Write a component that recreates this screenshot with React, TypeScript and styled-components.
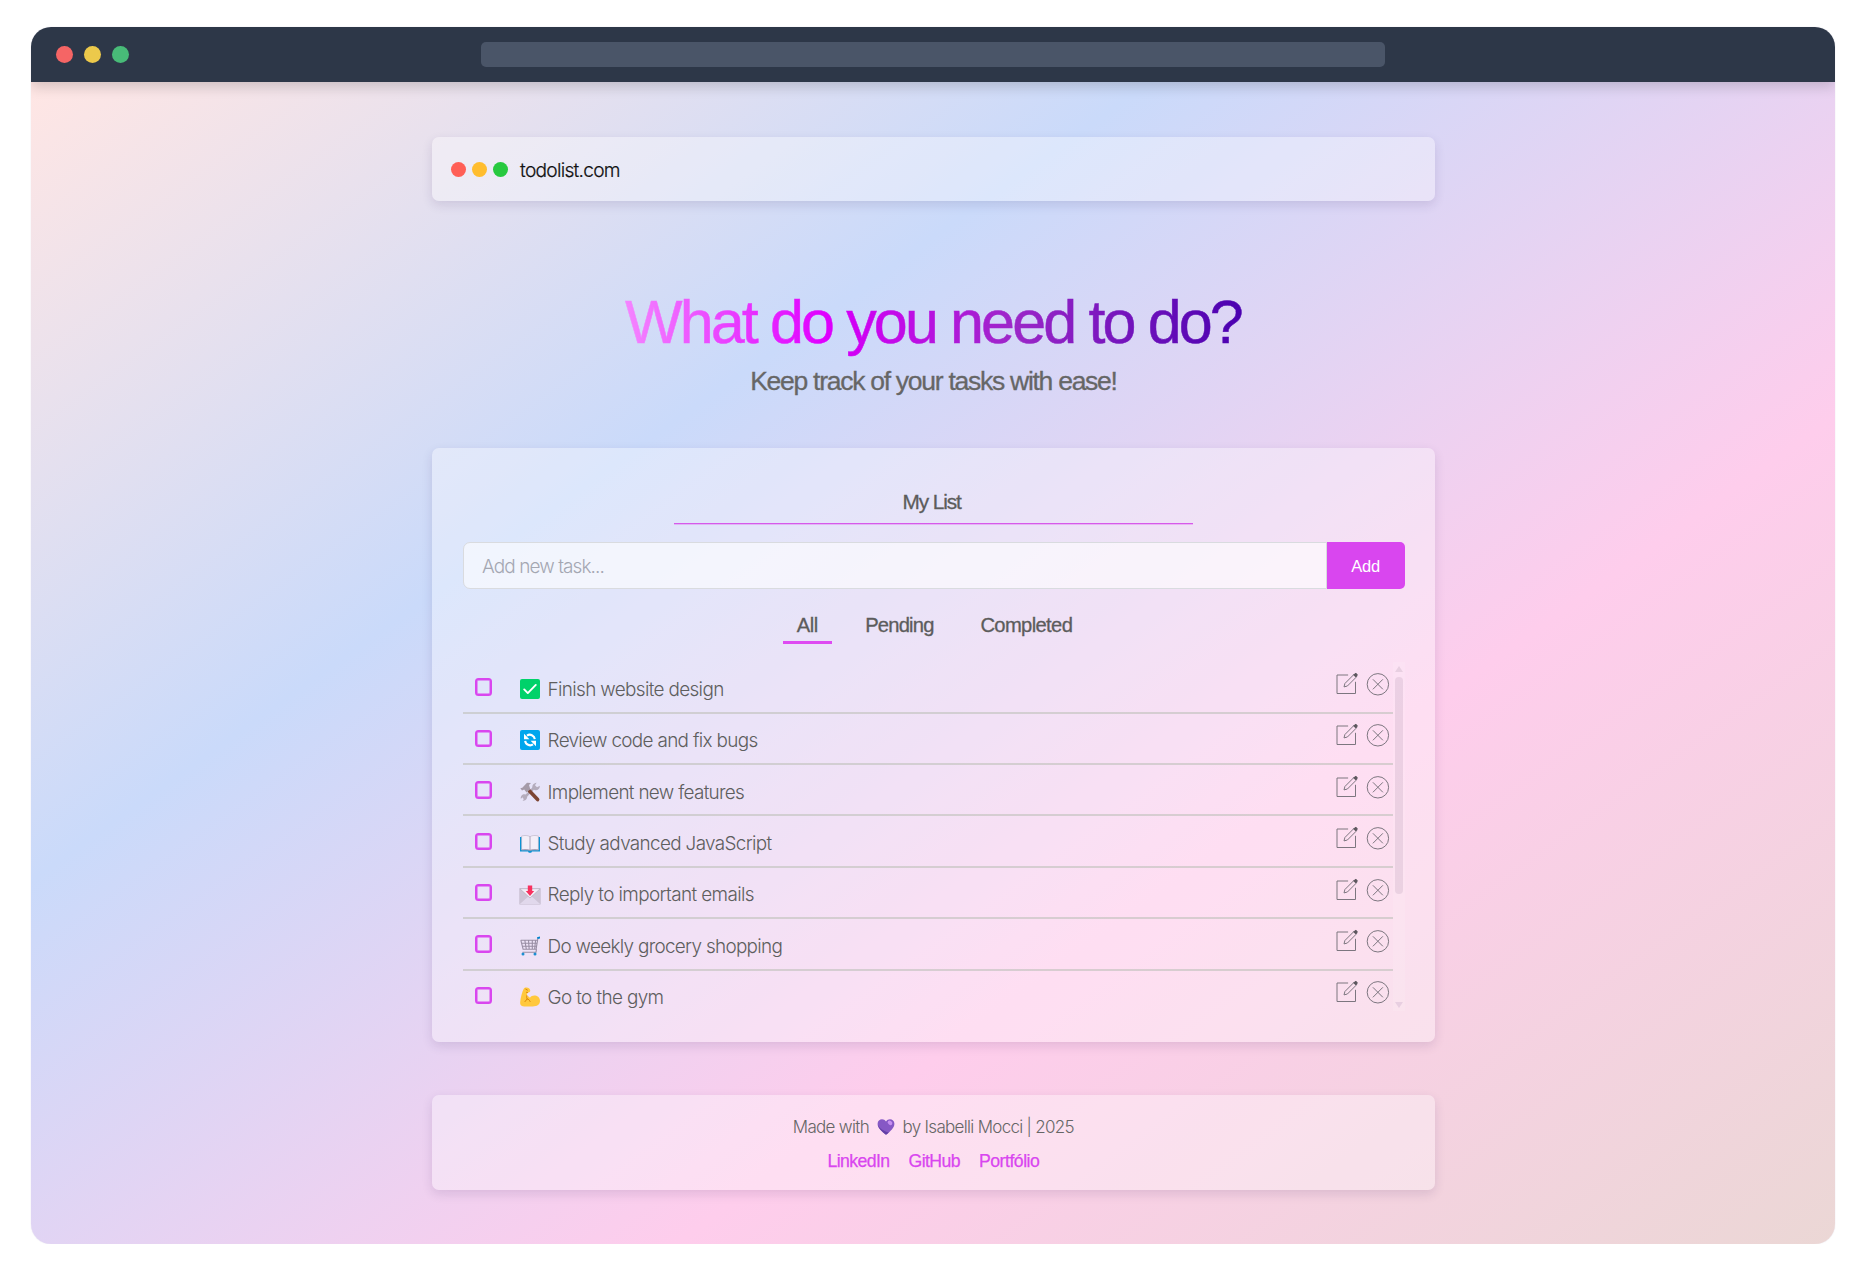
import React from "react";
import styled, { createGlobalStyle } from "styled-components";

const GlobalStyle = createGlobalStyle`
  * { box-sizing: border-box; }
  body { margin: 0; background: #fff; overflow: hidden; }
`;

const grotesk = `"Liberation Sans", Arial, sans-serif`;
const light = `Inter, "Liberation Sans", sans-serif`;
const accent = "#d946ef";

const Browser = styled.div`
  width: 1804.2px;
  height: 1217.3px;
  margin: 27px 0 0 31.3px;
  border-radius: 20px;
  overflow: hidden;
  display: flex;
  flex-direction: column;
  box-shadow: 0 0 1px rgba(120, 110, 160, 0.35);
`;

const TopBar = styled.header`
  flex: none;
  height: 55.4px;
  display: grid;
  grid-template-columns: 1fr 904px 1fr;
  align-items: center;
  background: #2d3748;
  box-shadow: 0 5px 12px rgba(0, 0, 0, 0.16);
  z-index: 1;
`;

const Lights = styled.div<{ $gap: number }>`
  display: flex;
  gap: ${(p) => p.$gap}px;
`;

const WindowLights = styled(Lights)`
  padding-left: 24.7px;
`;

const Light = styled.span<{ $color: string; $size: number }>`
  width: ${(p) => p.$size}px;
  height: ${(p) => p.$size}px;
  border-radius: 50%;
  background: ${(p) => p.$color};
`;

const AddressBar = styled.div`
  height: 25px;
  border-radius: 5px;
  background: #4a5568;
`;

const Page = styled.main`
  flex: 1;
  padding-top: 54.9px;
  display: flex;
  flex-direction: column;
  align-items: center;
  background: linear-gradient(144.5deg, #ffe6e4 0%, #cadafa 32.6%, #fecdec 66.2%, #ebd7d5 100%);
`;

const Card = styled.section`
  width: 1003.6px;
  border-radius: 7px;
  background: rgba(255, 255, 255, 0.35);
  box-shadow: 0 4px 11px rgba(40, 20, 80, 0.12);
`;

const SiteCard = styled(Card)`
  height: 64px;
  padding: 0 19.9px;
  display: flex;
  align-items: center;
  gap: 12px;
`;

const SiteName = styled.span`
  padding-top: 1px;
  font: 300 19.2px/24px ${light};
  letter-spacing: -0.75px;
  color: #111;
  -webkit-text-stroke: 0.2px #111;
`;

const Title = styled.h1`
  margin: 85.6px 0 0;
  padding: 0 1px 0 0;
  font: 400 61px/70px ${grotesk};
  letter-spacing: -2.86px;
  color: transparent;
  -webkit-text-stroke: 0.5px transparent;
  background: linear-gradient(90deg, #f485ff 0%, #e000ff 32%, #d000f4 37%, #9c27c8 63%, #4a00b0 100%);
  background-clip: text;
  -webkit-background-clip: text;
`;

const Subtitle = styled.p`
  margin: 8.2px 0 51.2px;
  font: 400 26.5px/32px ${grotesk};
  letter-spacing: -1.27px;
  color: #666;
  -webkit-text-stroke: 0.3px #666;
`;

const ListCard = styled(Card)`
  padding: 41.5px 30.5px 31px 31px;
  display: flex;
  flex-direction: column;
  align-items: center;
`;

const ListTitle = styled.h2`
  width: 519px;
  margin: 0;
  padding: 0 4px 9.5px 0;
  text-align: center;
  font: 400 20.8px/24px ${grotesk};
  letter-spacing: -1.1px;
  color: #5c5c5c;
  -webkit-text-stroke: 0.3px #5c5c5c;
  border-bottom: 1px solid #d65aea;
  box-shadow: 0 1px 0 rgba(217, 70, 239, 0.3);
`;

const AddForm = styled.form`
  width: 100%;
  height: 47px;
  margin: 18px 0 24px;
  display: flex;
`;

const TaskInput = styled.input`
  flex: 1;
  min-width: 0;
  padding: 3px 18.5px 0;
  border: 1px solid #d9dbdf;
  border-radius: 7px 0 0 7px;
  background: rgba(255, 255, 255, 0.6);
  outline: none;
  font: 300 19px/24px ${light};
  letter-spacing: -0.93px;
  &::placeholder {
    color: #a4a7b2;
    opacity: 1;
  }
`;

const AddButton = styled.button`
  width: 78px;
  padding: 0;
  border: 0;
  border-radius: 0 5px 5px 0;
  background: ${accent};
  color: #fff;
  font: 400 16.5px/20px ${grotesk};
  letter-spacing: -0.2px;
`;

const Tabs = styled.nav`
  display: flex;
  gap: 19.6px;
  margin: 0 0 18px 1px;
`;

const Tab = styled.button<{ $active?: boolean; $track: number }>`
  padding: 0 ${(p) => 14 + p.$track}px 4px 14px;
  border: 0;
  border-bottom: 3px solid ${(p) => (p.$active ? "#de4bf2" : "transparent")};
  background: none;
  font: 400 20.2px/24px ${grotesk};
  letter-spacing: ${(p) => p.$track}px;
  color: #5c5c5c;
  -webkit-text-stroke: 0.3px #5c5c5c;
`;

const ListViewport = styled.div`
  width: 100%;
  height: 349px;
  display: flex;
  overflow: hidden;
`;

const TaskList = styled.ul`
  flex: 1;
  margin: 0;
  padding: 0;
  list-style: none;
`;

const TaskRow = styled.li`
  height: 51.4px;
  padding: 0 2.3px 0 12px;
  display: flex;
  align-items: flex-start;
  border-bottom: 2px solid rgba(192, 194, 188, 0.62);
`;

const Check = styled.span`
  width: 17.4px;
  height: 17.4px;
  margin-top: 16.2px;
  border: 2px solid ${accent};
  border-radius: 3.5px;
  box-shadow: inset 0 0 0 0.5px ${accent};
`;

const Emoji = styled.svg`
  width: 22px;
  height: 22px;
  margin: 15.7px 0 0 27.2px;
  flex: none;
`;

const TaskText = styled.span<{ $track: number }>`
  flex: 1;
  margin: 15.5px 0 0 6.4px;
  font: 300 18.9px/24px ${light};
  letter-spacing: ${(p) => p.$track}px;
  color: #5e5e5e;
`;

const RowIcon = styled.svg`
  width: 24px;
  height: 24px;
  margin: 9.8px 0 0 8.8px;
  fill: none;
  stroke: #7c767f;
  stroke-width: 1;
`;

const Scroll = styled.div`
  width: 12px;
  padding: 3.5px 0;
  display: flex;
  flex-direction: column;
  align-items: center;
  background: rgba(255, 255, 255, 0.1);
`;

const Arrow = styled.span<{ $down?: boolean }>`
  border: 4px solid transparent;
  border-top-width: ${(p) => (p.$down ? 6 : 0)}px;
  border-bottom-width: ${(p) => (p.$down ? 0 : 6)}px;
  border-${(p) => (p.$down ? "top" : "bottom")}-color: #e8cfe1;
`;

const Thumb = styled.span`
  width: 8px;
  height: 217px;
  margin: 5.5px 0 auto;
  border-radius: 4px;
  background: rgba(190, 160, 185, 0.28);
`;

const Footer = styled(Card)`
  margin-top: 52.5px;
  height: 95.4px;
  padding-top: 21px;
  display: flex;
  flex-direction: column;
  align-items: center;
`;

const Credit = styled.p`
  margin: 0 0 12.3px;
  display: flex;
  align-items: center;
  font: 300 17px/22px ${light};
  letter-spacing: -0.7px;
  color: #666;
`;

const Heart = styled.svg`
  width: 18px;
  height: 18px;
  margin: 1px 7.8px 0;
`;

const Links = styled.div`
  display: flex;
  gap: 19px;
`;

const Link = styled.a<{ $track: number }>`
  font: 400 17.7px/22px ${grotesk};
  letter-spacing: ${(p) => p.$track}px;
  color: ${accent};
  -webkit-text-stroke: 0.25px ${accent};
`;

const emojis: Record<string, React.ReactNode> = {
  check: (
    <>
      <rect x="1" y="1" width="20" height="20" rx="2" fill="#00d26a" />
      <path d="M5.2 11.4l3.6 3.7 8-8.2" fill="none" stroke="#fff" strokeWidth="1.9" strokeLinecap="round" strokeLinejoin="round" />
    </>
  ),
  cycle: (
    <>
      <rect x="1" y="1" width="20" height="20" rx="2" fill="#00a6ed" />
      <path d="M15.8 10.2A5 5 0 0 0 8 6.6M6.2 11.8a5 5 0 0 0 7.8 3.6" fill="none" stroke="#fff" strokeWidth="2.1" />
      <path d="M5 4.8v5.4h5.4zM17 17.2v-5.4h-5.4z" fill="#fff" />
    </>
  ),
  tools: (
    <>
      <path d="M4.5 17.6L15.5 6.2" stroke="#b4acbc" strokeWidth="2.6" />
      <path d="M13.6 7.6c-.9-2.9.6-5.6 4-5.9L16 4.2l2 2 2.9-1.5c.1 3.4-2.7 5.1-5.4 4.3zM7.6 14.2c1.6 2-.2 5.9-4 5.5l1.5-2-1.3-1.4-2 1.4c-.5-3.3 3-5.7 5.8-3.5z" fill="#b4acbc" />
      <path d="M10.3 9.8l8.3 8.8" stroke="#7d4533" strokeWidth="3.6" strokeLinecap="round" />
      <path d="M1.3 7.3l2-.6L8 1.7l4 .3-2 2 1.3 4.2-3.8 3.2-2.3-2.8-2.2.9z" fill="#a59ba8" />
    </>
  ),
  book: (
    <>
      <path d="M1 5h20v14.5h-8l-.8 1.300H9.8L9 19.500H1z" fill="#0b93d3" />
      <path d="M2.600 4c3-.8 6.200-.8 8.400.7 2.200-1.500 5.400-1.500 8.400-.7V18H2.600z" fill="#f3eef8" stroke="#b9b0c2" strokeWidth=".6" />
      <path d="M11 4.600V18.200M2.600 17.900c3-.6 6.200-.6 8.400.6 2.200-1.200 5.400-1.200 8.400-.6" fill="none" stroke="#9b93ab" strokeWidth=".8" />
    </>
  ),
  mail: (
    <>
      <rect x=".2" y="4.300" width="21.600" height="16.500" rx="1" fill="#cdc4d6" />
      <path d="M.6 20.300L9 12.800h4l8.400 7.500z" fill="#e1d8ec" />
      <path d="M.8 4.700h20.400L11 14z" fill="#f3eef8" stroke="#b4acbc" strokeWidth=".7" />
      <path d="M8.800 1.500h4.400V7h2L11 12 6.800 7h2z" fill="#f8315f" />
    </>
  ),
  cart: (
    <>
      <path d="M1.800 5.200l2.300 9h13L19 2.600M5.800 5.200l1.500 9M9.500 5.200l.7 9M13.300 5.200v9M16.600 5.200l-1 9M1.800 5.200h16.600M2.600 8.200h15.200M3.400 11.200h14M17.500 14.200l-.5 3H3.500" fill="none" stroke="#998ea4" strokeWidth="1.100" />
      <path d="M18 2.200l3-.6v2l-2.400.3z" fill="#0084ce" />
      <circle cx="4" cy="19" r="1.500" fill="#1c8fd2" />
      <circle cx="16" cy="19" r="1.500" fill="#1c8fd2" />
    </>
  ),
  muscle: (
    <>
      <path d="M6.500 1.600c2.300-.6 4.500.8 4.700 2.600.2 1.700-1.200 2.600-2.700 2.300L7.800 9.600c1.300.4 2.300 1.200 3.100 2.200 2.600-4 9.900-2.500 10.100 3 .1 3.800-2.900 5.700-7.400 5.700H5.200C1.600 20.500.9 18 1.200 15.800 1.700 11.500 3.200 6 4.600 3.100c.3-.8 1-1.300 1.900-1.500z" fill="#ffc83d" />
      <path d="M7.800 9.600c-.5 1.700 0 2.500.4 3.300L6 15.600M8.200 12.900c1.500.1 2.300 1.300 2.900 2.600M7.300 6.300c.3.300.7.300 1.200.2M6.800 3.200l1.600.9" fill="none" stroke="#d67d00" strokeWidth=".9" strokeLinecap="round" />
    </>
  ),
};

const tasks = [
  { icon: "check", label: "Finish website design", track: -0.64 },
  { icon: "cycle", label: "Review code and fix bugs", track: -0.67 },
  { icon: "tools", label: "Implement new features", track: -0.68 },
  { icon: "book", label: "Study advanced JavaScript", track: -0.65 },
  { icon: "mail", label: "Reply to important emails", track: -0.6 },
  { icon: "cart", label: "Do weekly grocery shopping", track: -0.69 },
  { icon: "muscle", label: "Go to the gym", track: -0.62 },
];

const EditIcon = () => (
  <RowIcon viewBox="0 0 24 24">
    <path d="M14.100 3H3v18.500h18.500V9.800" />
    <path d="M10 14.900l.9-3.400 9.300-9.300 2.500 2.500-9.300 9.300z" />
    <path d="M19.700 2.900l1.200-1.200c1.200-1 3 .8 2 2l-1.200 1.200z" fill="#5c575e" stroke="#5c575e" />
  </RowIcon>
);

const CloseIcon = () => (
  <RowIcon viewBox="0 0 24 24">
    <circle cx="11.900" cy="12.300" r="10.700" />
    <path d="M6.900 7.300l10 10M16.900 7.300l-10 10" />
  </RowIcon>
);

export default function App() {
  return (
    <>
      <GlobalStyle />
      <Browser>
        <TopBar>
          <WindowLights $gap={10.9}>
            <Light $size={17} $color="#f56565" />
            <Light $size={17} $color="#ecc94b" />
            <Light $size={17} $color="#48bb78" />
          </WindowLights>
          <AddressBar />
        </TopBar>
        <Page>
          <SiteCard>
            <Lights $gap={5.8}>
              <Light $size={15} $color="#ff5f56" />
              <Light $size={15} $color="#ffbd2e" />
              <Light $size={15} $color="#27c93f" />
            </Lights>
            <SiteName>todolist.com</SiteName>
          </SiteCard>
          <Title>What do you need to do?</Title>
          <Subtitle>Keep track of your tasks with ease!</Subtitle>
          <ListCard>
            <ListTitle>My List</ListTitle>
            <AddForm>
              <TaskInput placeholder="Add new task..." />
              <AddButton type="button">Add</AddButton>
            </AddForm>
            <Tabs>
              <Tab $active $track={-0.4}>All</Tab>
              <Tab $track={-0.8}>Pending</Tab>
              <Tab $track={-0.65}>Completed</Tab>
            </Tabs>
            <ListViewport>
              <TaskList>
                {tasks.map((task) => (
                  <TaskRow key={task.label}>
                    <Check />
                    <Emoji viewBox="0 0 22 22">{emojis[task.icon]}</Emoji>
                    <TaskText $track={task.track}>{task.label}</TaskText>
                    <EditIcon />
                    <CloseIcon />
                  </TaskRow>
                ))}
              </TaskList>
              <Scroll>
                <Arrow />
                <Thumb />
                <Arrow $down />
              </Scroll>
            </ListViewport>
          </ListCard>
          <Footer>
            <Credit>
              <span>Made with</span>
              <Heart viewBox="0 0 18 18">
                <path d="M9 16.800C4.500 13.400.6 9.600.6 5.700.6 1 6.600-.4 9 3.500 11.400-.4 17.400 1 17.400 5.700c0 3.900-3.900 7.700-8.400 11.100z" fill="#8658c5" />
                <path d="M.7 6.500c.4 3.700 4.100 7.100 8.300 10.300 1-.8 2-1.500 2.900-2.300C6.500 13 2.500 10.500.7 6.500z" fill="#6340a6" />
                <ellipse cx="13" cy="4.800" rx="2.600" ry="1.900" transform="rotate(40 13 4.800)" fill="#c790f1" />
              </Heart>
              <span>by Isabelli Mocci | 2025</span>
            </Credit>
            <Links>
              <Link $track={-0.6}>LinkedIn</Link>
              <Link $track={-0.6}>GitHub</Link>
              <Link $track={-0.5}>Portfólio</Link>
            </Links>
          </Footer>
        </Page>
      </Browser>
    </>
  );
}
